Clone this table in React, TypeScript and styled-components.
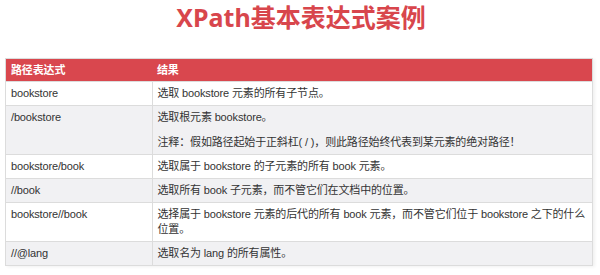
import styled, { createGlobalStyle } from 'styled-components';

const GlobalStyle = createGlobalStyle`
  body {
    margin: 0;
    background: #ffffff;
    font-family: "Liberation Sans", "Noto Sans CJK SC", sans-serif;
  }
`;

const Page = styled.div`
  width: 600px;
  height: 275px;
  padding: 0 7px 0 5px;
  box-sizing: border-box;
  display: flex;
  flex-direction: column;
  align-items: stretch;
`;

const Title = styled.h1`
  margin: 0;
  height: 58px;
  padding-left: 4px;
  box-sizing: border-box;
  text-align: center;
  font-family: "Noto Sans", "Noto Sans CJK SC", sans-serif;
  font-size: 25px;
  line-height: 34px;
  font-weight: 700;
  color: #d8464c;
`;

const Table = styled.table`
  width: 100%;
  border-collapse: collapse;
  border: 1px solid #dcdcdc;
  box-shadow: 2px 1px 3px rgba(0, 0, 0, 0.06);
  font-size: 11px;
  letter-spacing: -0.15px;
  line-height: 15px;
  color: #333;
`;

const HeadCell = styled.th`
  background: #d9474e;
  color: #fff;
  font-weight: 700;
  font-size: 11px;
  text-align: left;
  padding: 4px 5px 3px;
  height: 15px;
  &:first-child {
    width: 136px;
  }
`;

const Row = styled.tr<{ $shaded?: boolean }>`
  background: ${(p) => (p.$shaded ? '#f1f1f3' : '#ffffff')};
`;

const Cell = styled.td`
  vertical-align: top;
  padding: 4px 4px 4px 5px;
  border: 1px solid #dcdcdc;
`;

const Note = styled.p`
  margin: 0;
  & + & {
    margin-top: 10px;
  }
`;

const rows: { path: string; result: string[] }[] = [
  { path: 'bookstore', result: ['选取 bookstore 元素的所有子节点。'] },
  {
    path: '/bookstore',
    result: [
      '选取根元素 bookstore。',
      '注释：假如路径起始于正斜杠( / )，则此路径始终代表到某元素的绝对路径！',
    ],
  },
  { path: 'bookstore/book', result: ['选取属于 bookstore 的子元素的所有 book 元素。'] },
  { path: '//book', result: ['选取所有 book 子元素，而不管它们在文档中的位置。'] },
  {
    path: 'bookstore//book',
    result: ['选择属于 bookstore 元素的后代的所有 book 元素，而不管它们位于 bookstore 之下的什么位置。'],
  },
  { path: '//@lang', result: ['选取名为 lang 的所有属性。'] },
];

const App = () => {
  return (
    <>
      <GlobalStyle />
      <Page>
        <Title>XPath基本表达式案例</Title>
        <Table>
          <thead>
            <tr>
              <HeadCell>路径表达式</HeadCell>
              <HeadCell>结果</HeadCell>
            </tr>
          </thead>
          <tbody>
            {rows.map((r, i) => (
              <Row key={r.path} $shaded={i % 2 === 1}>
                <Cell>{r.path}</Cell>
                <Cell>
                  {r.result.map((t) => (
                    <Note key={t}>{t}</Note>
                  ))}
                </Cell>
              </Row>
            ))}
          </tbody>
        </Table>
      </Page>
    </>
  );
};

export default App;
